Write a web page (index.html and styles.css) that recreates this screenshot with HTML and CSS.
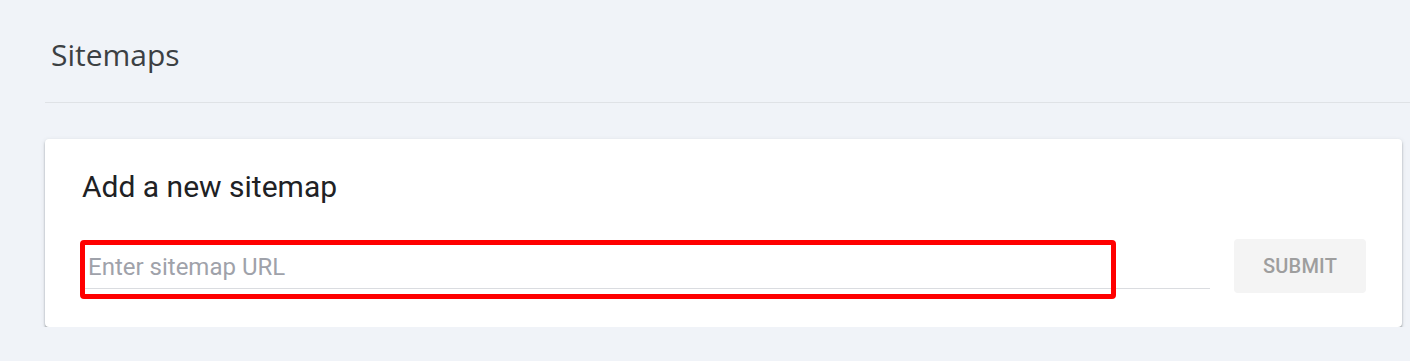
FILE: index.html
```html
<!DOCTYPE html>
<html lang="en">
<head>
  <meta charset="UTF-8">
  <meta name="viewport" content="width=device-width, initial-scale=1.0">
  <title>Sitemaps</title>
  <link rel="stylesheet" href="styles.css">
</head>
<body>
  <div class="page-header">
    <h1>Sitemaps</h1>
  </div>
  <div class="card">
    <h2>Add a new sitemap</h2>
    <div class="add-row">
      <div class="url-field">
        <input class="url-input" type="text" placeholder="Enter sitemap URL" />
      </div>
      <button class="submit-btn" disabled>SUBMIT</button>
      <div class="highlight"></div>
    </div>
  </div>
</body>
</html>
```

FILE: styles.css
```css
*{
  box-sizing: border-box;
}
body{
  margin: 0;
  background: #f0f3f8;
  font-family: Roboto, 'Liberation Sans', Arial, sans-serif;
}
.page-header{
  margin-left: 45px;
  height: 103px;
  border-bottom: 1px solid #dfe2e6;
  padding-left: 6px;
  padding-top: 35px;
}
h1{
  margin: 0;
  font-family: 'Open Sans', sans-serif;
  font-weight: 400;
  font-size: 30px;
  line-height: 40px;
  color: #3c4043;
}
.card{
  margin: 36px 8px 0 45px;
  background: #fff;
  border-radius: 4px;
  box-shadow: 0 2px 2px rgba(60,64,67,0.4), 0 1px 4px rgba(60,64,67,0.15);
  padding: 30px 36px 34px 37px;
}
h2{
  margin: 0;
  font-weight: 400;
  font-size: 30px;
  line-height: 36px;
  color: #202124;
}
.add-row{
  position: relative;
  margin-top: 34px;
  display: flex;
  align-items: center;
  gap: 24px;
}
.url-field{
  flex: 1;
  height: 44px;
  margin-top: 2px;
  padding-left: 4px;
  border-bottom: 1px solid #dadce0;
}
.url-input{
  width: 100%;
  height: 43px;
  border: 0;
  outline: none;
  padding: 0 0 0 2px;
  font-family: Roboto, sans-serif;
  font-size: 24px;
  background: transparent;
}
.url-input::placeholder{
  color: #9fa2aa;
}
.submit-btn{
  width: 132px;
  height: 54px;
  border: 0;
  border-radius: 4px;
  background: #f4f4f4;
  color: #9e9e9e;
  font-family: Roboto, sans-serif;
  font-weight: 500;
  font-size: 20px;
  letter-spacing: 0.2px;
}
.highlight{
  position: absolute;
  left: -2px;
  top: 1px;
  width: 1036px;
  height: 59px;
  border: 5px solid #ff0000;
  border-radius: 4px;
  pointer-events: none;
}
```
